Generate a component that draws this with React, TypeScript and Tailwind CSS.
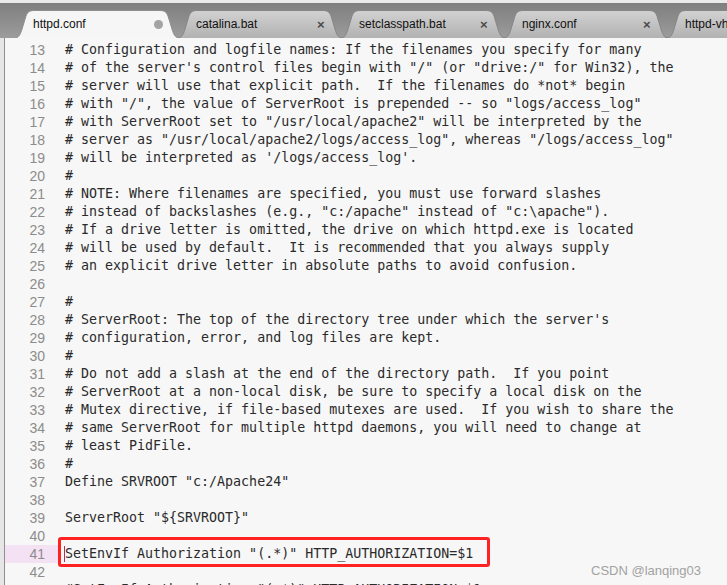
import React from "react";

const tabs = [
  { name: "httpd.conf", active: true },
  { name: "catalina.bat", active: false },
  { name: "setclasspath.bat", active: false },
  { name: "nginx.conf", active: false },
  { name: "httpd-vhosts.conf", active: false },
];

const lines: [number, string][] = [
  [13, "# Configuration and logfile names: If the filenames you specify for many"],
  [14, '# of the server\'s control files begin with "/" (or "drive:/" for Win32), the'],
  [15, "# server will use that explicit path.  If the filenames do *not* begin"],
  [16, '# with "/", the value of ServerRoot is prepended -- so "logs/access_log"'],
  [17, '# with ServerRoot set to "/usr/local/apache2" will be interpreted by the'],
  [18, '# server as "/usr/local/apache2/logs/access_log", whereas "/logs/access_log"'],
  [19, "# will be interpreted as '/logs/access_log'."],
  [20, "#"],
  [21, "# NOTE: Where filenames are specified, you must use forward slashes"],
  [22, '# instead of backslashes (e.g., "c:/apache" instead of "c:\\apache").'],
  [23, "# If a drive letter is omitted, the drive on which httpd.exe is located"],
  [24, "# will be used by default.  It is recommended that you always supply"],
  [25, "# an explicit drive letter in absolute paths to avoid confusion."],
  [26, ""],
  [27, "#"],
  [28, "# ServerRoot: The top of the directory tree under which the server's"],
  [29, "# configuration, error, and log files are kept."],
  [30, "#"],
  [31, "# Do not add a slash at the end of the directory path.  If you point"],
  [32, "# ServerRoot at a non-local disk, be sure to specify a local disk on the"],
  [33, "# Mutex directive, if file-based mutexes are used.  If you wish to share the"],
  [34, "# same ServerRoot for multiple httpd daemons, you will need to change at"],
  [35, "# least PidFile."],
  [36, "#"],
  [37, 'Define SRVROOT "c:/Apache24"'],
  [38, ""],
  [39, 'ServerRoot "${SRVROOT}"'],
  [40, ""],
  [41, 'SetEnvIf Authorization "(.*)" HTTP_AUTHORIZATION=$1'],
  [42, ""],
  [43, '#SetEnvIf Authorization "(.*)" HTTP_AUTHORIZATION=$1'],
];

const TabShape = ({ active }: { active: boolean }) => (
  <svg className="absolute inset-0" width="170" height="28" viewBox="0 0 170 28">
    <defs>
      <linearGradient id="inact" x1="0" y1="0" x2="0" y2="1">
        <stop offset="0" stopColor="#d2d2d2" />
        <stop offset="1" stopColor="#b1b1b1" />
      </linearGradient>
    </defs>
    <path
      d="M0,28.5 C6,28.5 8,26 10,19 L14,6 C16,1 18,0.5 24,0.5 H146 C152,0.5 154,1 156,6 L160,19 C162,26 164,28.5 170,28.5 Z"
      fill={active ? "#f6f6f6" : "url(#inact)"}
      stroke={active ? "#8e8e8e" : "#858585"}
      strokeWidth="1"
    />
  </svg>
);

const App = () => {
  return (
    <div className="relative w-[727px] h-[585px] overflow-hidden bg-[#f7f7f7] font-['DejaVu_Sans_Mono',monospace]">
      {/* tab bar */}
      <div className="h-[38px] bg-gradient-to-b from-[#eaeaea] from-[8%] via-[#7f7f7f] via-[9%] to-[#9c9c9c] pt-[10px] pl-[12px] flex overflow-hidden">
        {tabs.map((t, i) => (
          <div
            key={t.name}
            className={`relative shrink-0 w-[170px] h-[28px] ${i > 0 ? "-ml-[7px]" : ""} ${t.active ? "z-10" : ""}`}
          >
            <TabShape active={t.active} />
            <div className="relative flex items-center h-full pl-[21px] text-[12px] text-[#111] font-['Liberation_Sans',sans-serif]">
              <span className="w-[120px] whitespace-nowrap">{t.name}</span>
              {t.active ? (
                <span className="ml-[1px] w-[9px] h-[9px] rounded-full bg-[#a3a3a3]" />
              ) : (
                <span className="ml-[1px] text-[13px] font-bold text-[#4a4a4a] leading-none">×</span>
              )}
            </div>
          </div>
        ))}
      </div>

      {/* editor */}
      <div className="flex">
        <div className="w-[4px] bg-[#e6e6e6]" />
        <div className="w-px bg-[#8f8f8f]" />
        <div className="flex-1 pt-[3px]">
          {lines.map(([n, text]) => (
            <div key={n} className="flex h-[18px] items-center">
              <div
                className={`w-[55px] h-full pr-[15px] flex items-center justify-end text-[14px] text-[#8c8c8c] font-['Liberation_Sans',sans-serif] ${
                  n === 41 ? "bg-[#f4e1f4]" : ""
                }`}
              >
                {n}
              </div>
              <div className="relative pl-[5px] text-[13.3px] text-[#2a2a2a] whitespace-pre leading-[18px]">
                {n === 41 && <span className="absolute left-[4px] top-[1px] w-px h-[16px] bg-[#b0305a]" />}
                {text}
              </div>
            </div>
          ))}
        </div>
      </div>

      {/* highlight box */}
      <div className="absolute left-[58px] top-[537px] w-[432px] h-[30px] border-[3px] border-[#ff2222] rounded-[3px]" />

      {/* watermark */}
      <div className="absolute left-[591px] top-[561px] text-[13px] text-[#a2a2a2] font-['Liberation_Sans',sans-serif] whitespace-nowrap">
        CSDN @lanqing03
      </div>
    </div>
  );
};

export default App;
